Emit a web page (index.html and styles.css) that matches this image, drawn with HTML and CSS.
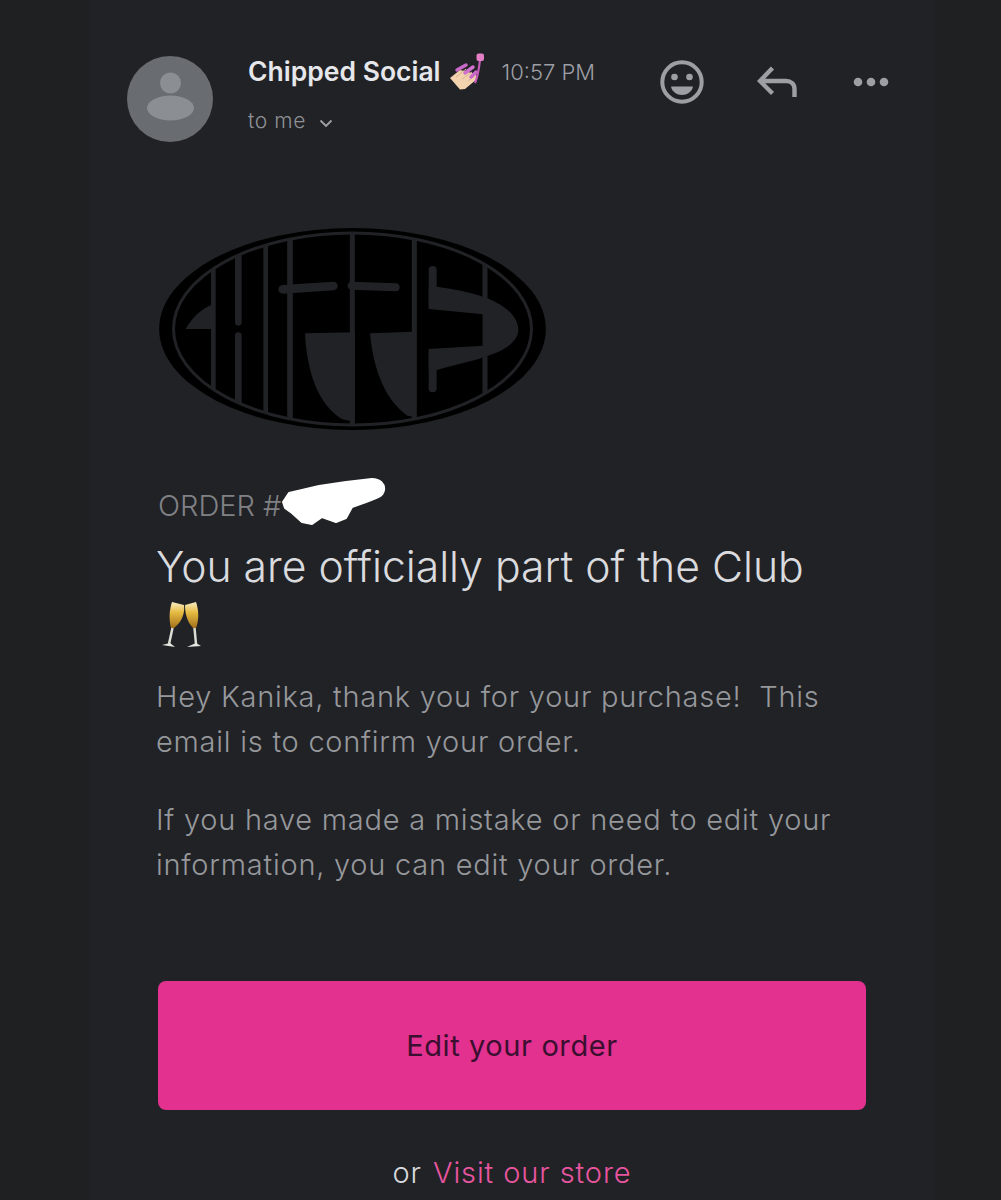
FILE: index.html
```html
<!DOCTYPE html>
<html lang="en">
<head>
<meta charset="utf-8">
<title>Chipped Social order email</title>
<link rel="stylesheet" href="styles.css">
</head>
<body>
<main class="mail">
  <header class="head">
    <svg class="avatar" viewBox="0 0 86 86" aria-hidden="true">
      <circle cx="43" cy="43" r="43" fill="#696c71"/>
      <circle cx="43.5" cy="27" r="10.5" fill="#8b8e93"/>
      <ellipse cx="43.500" cy="52" rx="23.500" ry="12.500" fill="#8b8e93"/>
    </svg>
    <div class="meta">
      <div class="meta-top">
        <span class="sender">Chipped Social</span>
        <svg class="nail" viewBox="0 0 50 45" aria-hidden="true">
          <path d="M10 28 L20 20 L36 24 L37 29 L25 39 L20 39.500 Z" fill="#f3d3ae"/>
          <path d="M16 27 L26 19 M22 29 L32 22 M28 31 L36 25" stroke="#d8b692" stroke-width="1"/>
          <path d="M17 20 L26 15" stroke="#c868c8" stroke-width="3.500" stroke-linecap="round"/>
          <path d="M25 23 L33 17" stroke="#d070d0" stroke-width="3.500" stroke-linecap="round"/>
          <path d="M31 27 L36 22" stroke="#c868c8" stroke-width="3.500" stroke-linecap="round"/>
          <path d="M35 33 C38 26 39 19 40 10" stroke="#c25cb8" stroke-width="2.200" fill="none"/>
          <rect x="36.500" y="3.500" width="7.500" height="7.500" rx="2" fill="#e57fc5"/>
        </svg>
        <span class="time">10:57 PM</span>
      </div>
      <div class="to">to me
        <svg class="chevron" viewBox="0 0 14 9" aria-hidden="true"><path d="M1.500 1.500 L7 7 L12.500 1.500" fill="none" stroke="#a0a2a6" stroke-width="1.800"/></svg>
      </div>
    </div>
    <div class="actions">
      <svg class="smile" viewBox="0 0 44 44" aria-hidden="true">
        <circle cx="22" cy="22" r="19.700" fill="none" stroke="#9d9fa4" stroke-width="4"/>
        <circle cx="14.500" cy="17" r="3.300" fill="#9d9fa4"/>
        <circle cx="29.500" cy="17" r="3.300" fill="#9d9fa4"/>
        <path d="M11 26.500 H33 C32 32 27 35 22 35 C17 35 12 32 11 26.500 Z" fill="#9d9fa4"/>
      </svg>
      <svg class="reply" viewBox="0 0 40 32" aria-hidden="true">
        <path d="M15.500 2 L3 15 L15.500 27.500 M3 15 H29 C34 15 37.500 18 37.500 23 V31" fill="none" stroke="#9d9fa4" stroke-width="4.400"/>
      </svg>
      <svg class="dots" viewBox="0 0 36 10" aria-hidden="true">
        <circle cx="5" cy="5" r="4.300" fill="#9d9fa4"/>
        <circle cx="18" cy="5" r="4.300" fill="#9d9fa4"/>
        <circle cx="31" cy="5" r="4.300" fill="#9d9fa4"/>
      </svg>
    </div>
  </header>

  <section class="body">
    <svg class="logo" viewBox="0 0 1200 630" role="img" aria-label="Chipped logo">
      <defs><clipPath id="ring"><ellipse cx="592.500" cy="312" rx="537" ry="288"/></clipPath></defs>
      <ellipse cx="592.500" cy="312" rx="580" ry="303" fill="#000"/>
      <ellipse cx="592.500" cy="312" rx="537" ry="288" fill="none" stroke="#212226" stroke-width="9"/>
      <g clip-path="url(#ring)" fill="#212226" stroke="#212226">
        <path d="M175 0 V630" stroke-width="14"/>
        <path d="M332 0 V630" stroke-width="14"/>
        <path d="M405 0 V630" stroke-width="17"/>
        <path d="M592 0 V630" stroke-width="15"/>
        <path d="M778 0 V630" stroke-width="15"/>
        <path d="M990 0 V630" stroke-width="15"/>
        <path d="M250 0 V292" stroke-width="20" stroke-linecap="round"/>
        <path d="M250 332 V630" stroke-width="20" stroke-linecap="round"/>
        <path d="M92 312 C110 280 135 255 168 240 V312 Z" stroke="none"/>
        <path d="M383 193 L535 183" stroke-width="26" stroke-linecap="round"/>
        <path d="M590 182 L722 187" stroke-width="24" stroke-linecap="round"/>
        <path d="M450 325 L600 322 V592 L560 582 C490 540 455 440 450 325 Z" stroke="none"/>
        <path d="M645 325 L775 320 V575 L757 572 C695 530 655 440 645 325 Z" stroke="none"/>
        <path d="M833 135 V240" stroke-width="24" stroke-linecap="round" fill="none"/>
        <path d="M833 385 V490" stroke-width="24" stroke-linecap="round" fill="none"/>
        <path d="M845 185 C925 195 1005 215 1045 245 C1075 265 1090 290 1090 315 C1090 345 1055 375 1005 390 C955 410 895 420 845 435 L821 435 V372 L985 362 V268 L821 252 V190 Z" stroke="none"/>
      </g>
    </svg>

    <div class="order">ORDER #
      <svg class="scribble" viewBox="0 0 104 48" aria-hidden="true">
        <path d="M1 24 L7 15 L20 12 L37 8 L64 4 L90 1 C98 1 103 6 102 12 C101 18 96 20 84 24 L70 29 L64 40 L54 44 L40 39 L30 46 L20 44 L10 35 L3 30 Z" fill="#fff" stroke="#fff" stroke-width="2" stroke-linejoin="round"/>
      </svg>
    </div>
    <h1 class="title">You are officially part of the Club</h1>
    <svg class="cheers" viewBox="0 0 60 60" aria-hidden="true">
      <defs>
        <linearGradient id="gold" x1="0" y1="0" x2="0" y2="1"><stop offset="0" stop-color="#f7edc4"/><stop offset=".4" stop-color="#e6bb42"/><stop offset="1" stop-color="#a2701a"/></linearGradient>
      </defs>
      <path d="M23 7 L35 10 C36 18 33 27 25 33 L22 33 C20 25 20 16 23 7 Z" fill="url(#gold)"/>
      <path d="M36 10 L47 7 C50 16 50 25 47 33 L44 33 C38 27 36 18 36 10 Z" fill="url(#gold)"/>
      <path d="M23.500 33 L20 49 M45.500 33 L47 49" stroke="#dcdcd6" stroke-width="2.500"/>
      <path d="M13 50 L21 48 L26 52 Z M38 52 L47 48 L52 51 Z" fill="#e6e6e0"/>
    </svg>
    <p class="copy">Hey Kanika, thank you for your purchase! &nbsp;This email is to confirm your order.</p>
    <p class="copy">If you have made a mistake or need to edit your information, you can edit your order.</p>
    <a class="button" href="#">Edit your order</a>
    <p class="alt">or <a class="alt-link" href="#">Visit our store</a></p>
  </section>
</main>
</body>
</html>
```
FILE: styles.css
```css
* { box-sizing: border-box; }
html, body { margin: 0; height: 1200px; overflow: hidden; }
body {
  background: #1f2022;
  font-family: Inter, "Liberation Sans", sans-serif;
}
.mail {
  width: 845px;
  height: 1200px;
  margin-left: 90px;
  background: #212226;
}
.head {
  display: flex;
  padding: 56px 46px 0 37px;
}
.avatar { width: 86px; height: 86px; flex: none; }
.meta { flex: 1; margin-left: 35px; }
.meta-top { display: flex; align-items: center; height: 30px; }
.sender { color: #e6e7ea; font-size: 26.5px; font-weight: 600; white-space: nowrap; }
.nail { width: 50px; height: 45px; margin: 3px 0 0 -1px; flex: none; }
.time { color: #9d9fa4; font-size: 22px; font-weight: 300; margin: 1px 0 0 12px; white-space: nowrap; }
.to { color: #8f9195; font-size: 21px; font-weight: 300; margin-top: 22px; letter-spacing: .6px; }
.chevron { width: 14px; height: 9px; margin-left: 7px; }
.actions { display: flex; align-items: center; height: 52px; }
.smile { width: 44px; height: 44px; }
.reply { width: 40px; height: 32px; margin-left: 53px; }
.dots { width: 36px; height: 10px; margin-left: 56px; }
.body { padding: 83px 0 0 66px; }
.logo { display: block; width: 400px; height: 210px; margin-left: -1px; }
.order {
  position: relative;
  margin: 54px 0 0 2px;
  color: #808185;
  font-size: 29px;
  font-weight: 300;
  line-height: 34px;
}
.scribble { position: absolute; left: 124px; top: -11px; width: 104px; height: 48px; overflow: visible; }
.title {
  margin: 19px 0 0;
  color: #dadbde;
  font-size: 42.7px;
  font-weight: 300;
  line-height: 50px;
}
.cheers { display: block; width: 60px; height: 60px; margin: 3px 0 0 -7px; }
.copy {
  width: 700px;
  margin: 0 0 33px;
  color: #96989c;
  font-size: 29px;
  font-weight: 300;
  line-height: 45px;
  letter-spacing: .75px;
}
.cheers + .copy { margin-top: 19px; }
.button {
  display: flex;
  align-items: center;
  justify-content: center;
  width: 708px;
  height: 129px;
  margin: 94px 0 0 2px;
  border-radius: 8px;
  background: #e2318f;
  color: #3a0f30;
  font-size: 29px;
  font-weight: 400;
  letter-spacing: .6px;
  text-decoration: none;
}
.alt {
  width: 708px;
  margin: 40px 0 0 2px;
  text-align: center;
  color: #d8d9dc;
  font-size: 29px;
  font-weight: 300;
  line-height: 45px;
  letter-spacing: .9px;
}
.alt-link { color: #e8559f; text-decoration: none; margin-left: 2px; }
```
